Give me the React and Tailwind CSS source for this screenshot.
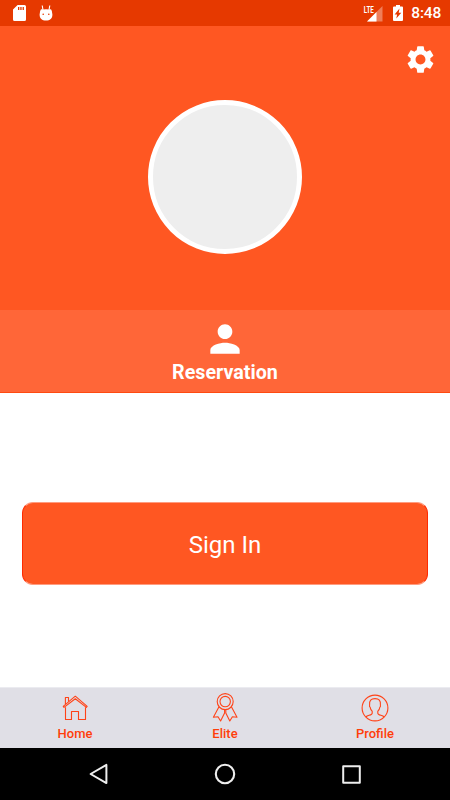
import React from "react";
import { MdPerson, MdSettings } from "react-icons/md";

function SdCardIcon() {
  return (
    <svg className="w-[13px] h-[16px]" viewBox="0 0 13 16">
      <path
        fill="#fff"
        fillRule="evenodd"
        d="M4.6 0H11.5Q13 0 13 1.5V14.5Q13 16 11.5 16H1.5Q0 16 0 14.5V4.6ZM5 2V5H6.3V2ZM7.3 2V5H8.6V2ZM9.6 2V5H10.9V2Z"
      />
    </svg>
  );
}

function DroidIcon() {
  return (
    <svg className="w-[14px] h-[17px]" viewBox="0 0 14 17">
      <path d="M3.2 0.5L4 5M10.8 0.5L10 5" stroke="#fff" strokeWidth="1.1" />
      <path fill="#fff" d="M2 4.2L4 4.6Q7 3.8 10 4.6L12 4.2Q13.4 6 13.4 9.5C13.4 13.6 11 15.6 7 15.6S.6 13.6 .6 9.5Q.6 6 2 4.2Z" />
      <circle cx="4.2" cy="9.2" r=".8" fill="#e63900" />
      <circle cx="9.8" cy="9.2" r=".8" fill="#e63900" />
    </svg>
  );
}

function SignalIcon() {
  return (
    <svg className="w-[20px] h-[17px]" viewBox="0 0 20 17">
      <path d="M19.5 1V16.5H4Z" fill="#fff" fillOpacity=".35" />
      <path d="M13.5 7V16.5H4Z" fill="#fff" />
      <text x="0.8" y="8" textLength="10" lengthAdjust="spacingAndGlyphs" fill="#fff" fontSize="9.4" fontWeight="700">
        LTE
      </text>
    </svg>
  );
}

function BatteryIcon() {
  return (
    <svg className="w-[10px] h-[16px]" viewBox="0 0 10 16">
      <path
        fill="#fff"
        fillRule="evenodd"
        d="M3 0H7V1.6H9Q10 1.6 10 2.6V15Q10 16 9 16H1Q0 16 0 15V2.6Q0 1.6 1 1.6H3ZM6.5 3.6L1.6 9.4H4.1L3.3 13.6L8.3 7.8H5.7Z"
      />
    </svg>
  );
}

function HomeIcon() {
  return (
    <svg className="w-[26px] h-[26px]" viewBox="0 0 26 26" fill="none" stroke="#ff4318" strokeWidth="1.1" strokeLinejoin="round">
      <path d="M3.5 12.2V24.5H9.5V16.5H16.5V24.5H23.5V12.2" />
      <path d="M2 12.4L1.2 11.3L13.3 1.2L25.2 11.3L24.4 12.4L13.3 3.7Z" />
      <path d="M3.4 9V2.5H6.5V6.4" />
    </svg>
  );
}

function EliteIcon() {
  return (
    <svg className="w-[28px] h-[30px]" viewBox="0 0 28 30" fill="none" stroke="#ff4318" strokeWidth="1.1" strokeLinejoin="round">
      <circle cx="14.2" cy="8.6" r="8" />
      <circle cx="14.2" cy="8.6" r="5.2" />
      <path d="M8 13.8L2.4 24.2L7 23.7L9.6 28L13.6 20V16.6" />
      <path d="M20.4 13.8L26 24.2L21.4 23.7L18.8 28L14.8 20V16.6" />
    </svg>
  );
}

function ProfileIcon() {
  return (
    <svg className="w-[28px] h-[28px]" viewBox="0 0 28 28" fill="none" stroke="#ff4318" strokeWidth="1.1" strokeLinejoin="round">
      <circle cx="14" cy="14" r="12.9" />
      <path d="M5 22.9C6.2 20.9 11.2 21.7 11.2 19.2V17.3C10 16.4 9.5 15 9.2 13.3Q8.2 12.8 8.6 10.8C8.2 6.6 10 4.6 14 4.6S19.8 6.6 19.4 10.8Q19.8 12.8 18.8 13.3C18.5 15 18 16.4 16.8 17.3V19.2C16.8 21.7 21.8 20.9 23 22.9" />
    </svg>
  );
}

const TABS = [
  { label: "Home", icon: HomeIcon },
  { label: "Elite", icon: EliteIcon },
  { label: "Profile", icon: ProfileIcon },
];

function StatusBar() {
  return (
    <div className="h-[26px] bg-[#e63900] flex items-center justify-between pl-[13px] pr-[9px]">
      <div className="flex items-center gap-[13px]">
        <SdCardIcon />
        <DroidIcon />
      </div>
      <div className="flex items-center">
        <SignalIcon />
        <div className="ml-[10px]">
          <BatteryIcon />
        </div>
        <span className="ml-[8px] mt-[2px] text-[15.5px] leading-none tracking-[-0.2px] font-medium text-white">8:48</span>
      </div>
    </div>
  );
}

function TabBar() {
  return (
    <nav className="h-[61px] bg-[#e0dfe6] border-t border-[#ebebf0] grid grid-cols-3">
      {TABS.map(({ label, icon: Icon }) => (
        <button key={label} className="flex flex-col items-center pt-[5px]">
          <span className="h-[30px] flex items-center">
            <Icon />
          </span>
          <span className="mt-[3px] text-[13px] leading-[15px] font-medium text-[#ff3d0a]">{label}</span>
        </button>
      ))}
    </nav>
  );
}

function NavigationBar() {
  return (
    <div className="h-[52px] bg-black flex items-center justify-between pl-[89px] pr-[89px]">
      <svg className="w-[19px] h-[22px]" viewBox="0 0 19 22" fill="none" stroke="#eee" strokeWidth="2" strokeLinejoin="round">
        <path d="M17.4 1.9V20.1L1.6 11Z" />
      </svg>
      <svg className="w-[22px] h-[22px]" viewBox="0 0 22 22" fill="none" stroke="#eee" strokeWidth="2.1">
        <circle cx="11" cy="11" r="9.2" />
      </svg>
      <svg className="w-[19px] h-[19px]" viewBox="0 0 19 19" fill="none" stroke="#eee" strokeWidth="2" strokeLinejoin="round">
        <rect x="1.2" y="1.2" width="16.6" height="16.6" />
      </svg>
    </div>
  );
}

export default function App() {
  return (
    <div className="w-[450px] h-[800px] flex flex-col bg-white overflow-hidden font-['Roboto',sans-serif]">
      <StatusBar />

      {/* Header */}
      <header className="h-[284px] bg-[#ff5722] flex flex-col">
        <div className="flex justify-end pt-[17px] pr-[13px]">
          <MdSettings size={33} color="#fff" />
        </div>
        <div className="mt-[24px] w-[154px] h-[154px] self-center rounded-full border-[5px] border-white bg-[#eeeeee]" />
      </header>

      <div className="h-[83px] bg-[#ff6638] border-b border-[#ff4a10] flex flex-col items-center pt-[7px]">
        <MdPerson size={44} color="#fff" />
        <span className="mt-[1px] text-[19.7px] leading-[22px] font-bold text-white">Reservation</span>
      </div>

      <main className="flex-1 px-[22px] pt-[109px]">
        <button className="w-full h-[83px] rounded-[11px] border border-x-[#ff2a00] border-y-[#ff9c80] bg-[#ff5722] text-white text-[24px] pt-[2px]">
          Sign In
        </button>
      </main>

      <TabBar />
      <NavigationBar />
    </div>
  );
}
